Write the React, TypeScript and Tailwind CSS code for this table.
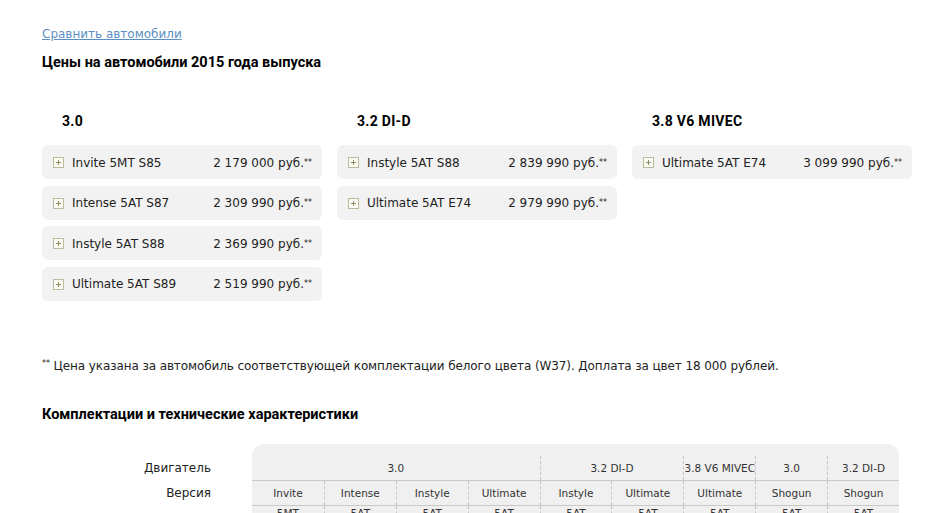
const bodyFont = "font-['DejaVu_Sans',Verdana,sans-serif]";
const headFont = "font-['Roboto','Liberation_Sans',sans-serif]";

const priceColumns = [
  {
    id: "0",
    engine: "3.0",
    items: [
      { name: "Invite 5MT S85", price: "2 179 000 руб." },
      { name: "Intense 5AT S87", price: "2 309 990 руб." },
      { name: "Instyle 5AT S88", price: "2 369 990 руб." },
      { name: "Ultimate 5AT S89", price: "2 519 990 руб." },
    ],
  },
  {
    id: "1",
    engine: "3.2 DI-D",
    items: [
      { name: "Instyle 5AT S88", price: "2 839 990 руб." },
      { name: "Ultimate 5AT E74", price: "2 979 990 руб." },
    ],
  },
  {
    id: "2",
    engine: "3.8 V6 MIVEC",
    items: [{ name: "Ultimate 5AT E74", price: "3 099 990 руб." }],
  },
];

const engineRow = [
  { label: "3.0", span: "col-span-4" },
  { label: "3.2 DI-D", span: "col-span-2" },
  { label: "3.8 V6 MIVEC", span: "col-span-1" },
  { label: "3.0", span: "col-span-1" },
  { label: "3.2 DI-D", span: "col-span-1" },
];

const versions = ["Invite", "Intense", "Instyle", "Ultimate", "Instyle", "Ultimate", "Ultimate", "Shogun", "Shogun"];
const gearboxes = ["5MT", "5AT", "5AT", "5AT", "5AT", "5AT", "5AT", "5AT", "5AT"];

const PlusIcon = () => (
  <svg width="11" height="11" viewBox="0 0 11 11" className="shrink-0">
    <rect x="0.5" y="0.5" width="10" height="10" fill="#fbfbf4" stroke="#b9bb9d" />
    <path d="M3 5.5h5M5.5 3v5" stroke="#8c8f6a" strokeWidth="1" />
  </svg>
);

const PriceCard = ({ name, price }: { name: string; price: string }) => (
  <div className="flex items-center h-[34px] w-[280px] bg-[#f2f2f2] rounded-md pl-[11px] pr-[10px] pt-[1px] text-[12px] leading-[16px] text-[#222]">
    <PlusIcon />
    <span className="ml-[8px]">{name}</span>
    <span className="ml-auto whitespace-nowrap">
      {price}
      <sup className="text-[8px] relative -top-[2px]">**</sup>
    </span>
  </div>
);

export default function App() {
  return (
    <div className={`${bodyFont} bg-white text-[#222] w-[947px] h-[513px] overflow-hidden pl-[42px] pr-[48px] pt-[26px] leading-[16px]`}>
      <a href="#" className="block w-fit text-[12px] leading-[16px] text-[#5b8fc2] underline">
        Сравнить автомобили
      </a>
      <h2 className={`${headFont} mt-[11px] text-[14.5px] leading-[20px] font-bold text-black`}>
        Цены на автомобили 2015 года выпуска
      </h2>

      <div className="flex mt-[38px]">
        {priceColumns.map((col) => (
          <div key={col.id} className="w-[295px] shrink-0">
            <h3 className={`${headFont} pl-[20px] text-[14px] font-bold text-black leading-[20px] tracking-[0.3px]`}>{col.engine}</h3>
            <div className="mt-[14px] flex flex-col gap-[6.5px]">
              {col.items.map((item) => (
                <PriceCard key={item.name} name={item.name} price={item.price} />
              ))}
            </div>
          </div>
        ))}
      </div>

      <p className="mt-[57px] text-[12px] leading-[16px] tracking-[-0.1px]">
        <sup className="text-[8px]">**</sup> Цена указана за автомобиль соответствующей комплектации белого цвета (W37). Доплата за цвет 18 000 рублей.
      </p>

      <h2 className={`${headFont} mt-[31px] text-[14.5px] leading-[20px] font-bold text-black`}>
        Комплектации и технические характеристики
      </h2>

      <div className="flex mt-[19px]">
        <div className="w-[210px] shrink-0 pt-[12px] pr-[41px] text-right text-[12px]">
          <div className="h-[25px] leading-[25px]">Двигатель</div>
          <div className="h-[25px] leading-[25px]">Версия</div>
        </div>
        <div className="w-[647px] shrink-0 bg-[#f0f0f0] rounded-t-[12px] pt-[12px] text-[10.5px] text-[#333] whitespace-nowrap">
          <div className="grid grid-cols-9 h-[25px] border-b border-[#c9c9c9]">
            {engineRow.map((e, i) => (
              <div
                key={i}
                className={`${e.span} flex items-center justify-center ${i > 0 ? "border-l border-dashed border-[#c4c4c4]" : ""}`}
              >
                {e.label}
              </div>
            ))}
          </div>
          <div className="grid grid-cols-9 h-[25px] border-b border-[#c9c9c9]">
            {versions.map((v, i) => (
              <div
                key={i}
                className={`flex items-center justify-center ${i > 0 ? "border-l border-dashed border-[#c4c4c4]" : ""}`}
              >
                {v}
              </div>
            ))}
          </div>
          <div className="grid grid-cols-9 h-[25px]">
            {gearboxes.map((g, i) => (
              <div
                key={i}
                className={`flex justify-center pt-[1px] leading-[12px] ${i > 0 ? "border-l border-dashed border-[#c4c4c4]" : ""}`}
              >
                {g}
              </div>
            ))}
          </div>
        </div>
      </div>
    </div>
  );
}
